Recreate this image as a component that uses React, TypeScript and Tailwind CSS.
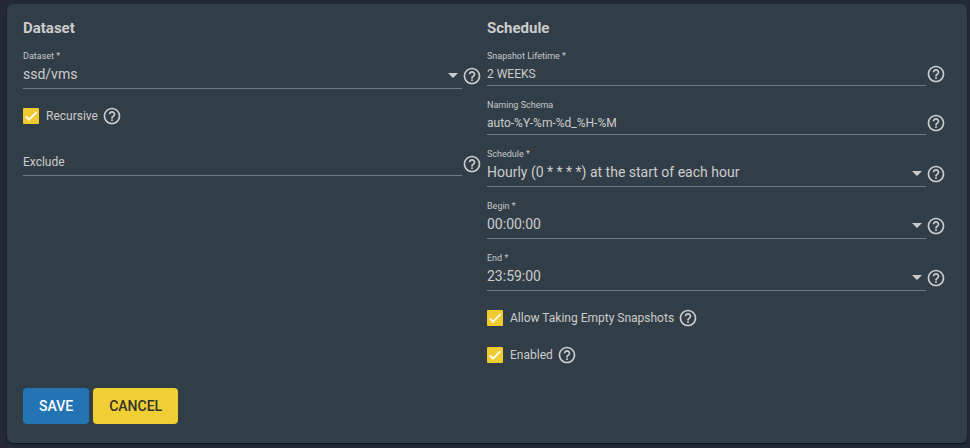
import { useId, useState } from 'react';
import { MdHelpOutline } from 'react-icons/md';
import clsx from 'clsx';

function HelpButton({ topic, className }: { topic: string; className?: string }) {
  return (
    <button
      type="button"
      aria-label={`Help: ${topic}`}
      className={clsx('shrink-0 text-[#cccccc]', className)}
    >
      <MdHelpOutline className="size-5" />
    </button>
  );
}

type FieldProps = { label: string; value?: string; required?: boolean };

function TextField({ label, value, required }: FieldProps) {
  const id = useId();
  return (
    <div className="mb-[13px] flex items-end pr-[5px]">
      <div className="min-w-0 flex-1">
        <label htmlFor={id} className="block text-[9px] leading-3 text-[#c6c8c9]">
          {label}
          {required && ' *'}
        </label>
        <input
          id={id}
          type="text"
          defaultValue={value}
          className="block h-6 w-full border-b border-[#737c82] bg-transparent text-xs outline-none"
        />
      </div>
      <HelpButton topic={label} className="mb-0.5" />
    </div>
  );
}

function SelectField({ label, value, required }: FieldProps) {
  const id = useId();
  return (
    <div className="mb-[13px] flex items-end pr-[5px]">
      <div className="min-w-0 flex-1">
        <label htmlFor={id} className="block text-[9px] leading-3 text-[#c6c8c9]">
          {label}
          {required && ' *'}
        </label>
        <div className="relative">
          <select
            id={id}
            defaultValue={value}
            className="block h-[27px] w-full appearance-none border-b border-[#737c82] bg-transparent pb-[3px] text-sm outline-none"
          >
            <option>{value}</option>
          </select>
          <svg
            viewBox="0 0 10 5"
            aria-hidden
            className="pointer-events-none absolute right-1 top-[11px] h-[5px] w-2.5 fill-[#cccccc]"
          >
            <path d="M0 0h10L5 5z" />
          </svg>
        </div>
      </div>
      <HelpButton topic={label} className="mb-[3px]" />
    </div>
  );
}

function CheckField({ label }: { label: string }) {
  const [checked, setChecked] = useState(true);
  return (
    <div className="flex h-7 items-center gap-1">
      <label className="flex items-center gap-[7px] text-xs">
        <span className="relative size-4">
          <input
            type="checkbox"
            checked={checked}
            onChange={(e) => setChecked(e.target.checked)}
            className="block size-4 appearance-none rounded-[1px] border-2 border-[#cccccc] checked:border-[#f0cb30] checked:bg-[#f0cb30]"
          />
          {checked && (
            <svg
              viewBox="0 0 24 24"
              aria-hidden
              className="pointer-events-none absolute inset-0 size-4 fill-none stroke-white stroke-[2.6]"
            >
              <path d="M4.1 12.7 9 17.6 20.3 6.3" />
            </svg>
          )}
        </span>
        {label}
      </label>
      <HelpButton topic={label} />
    </div>
  );
}

export default function App() {
  return (
    <main className="min-h-screen bg-[#232a35] pb-[5px] pl-[7px] pr-[3px] pt-1 font-[Roboto,sans-serif] text-[#cccccc]">
      <form
        onSubmit={(e) => e.preventDefault()}
        className="rounded-md bg-[#323e47] px-4 pb-[19px] pt-3 shadow-[0_1px_2px_rgba(0,0,0,0.6)]"
      >
        <div className="grid grid-cols-2">
          <section>
            <h2 className="mb-2.5 text-[15px] font-bold leading-6">Dataset</h2>
            <SelectField label="Dataset" value="ssd/vms" required />
            <CheckField label="Recursive" />
            <div className="mt-[22px] flex items-end pr-[5px]">
              <input
                type="text"
                aria-label="Exclude"
                placeholder="Exclude"
                className="block h-6 min-w-0 flex-1 border-b border-[#737c82] bg-transparent pb-1 text-xs outline-none placeholder:text-[#cccccc]"
              />
              <HelpButton topic="Exclude" className="mb-0.5" />
            </div>
          </section>

          <section>
            <h2 className="mb-2.5 text-[15px] font-bold leading-6">Schedule</h2>
            <TextField label="Snapshot Lifetime" value="2 WEEKS" required />
            <TextField label="Naming Schema" value="auto-%Y-%m-%d_%H-%M" />
            <SelectField label="Schedule" value="Hourly (0 * * * *) at the start of each hour" required />
            <SelectField label="Begin" value="00:00:00" required />
            <SelectField label="End" value="23:59:00" required />
            <div className="flex flex-col gap-[9px]">
              <CheckField label="Allow Taking Empty Snapshots" />
              <CheckField label="Enabled" />
            </div>
          </section>
        </div>

        <div className="mt-[19px] flex gap-1">
          <button type="submit" className="h-9 rounded-[4px] bg-[#2374b3] px-4 text-sm font-medium text-white">
            SAVE
          </button>
          <button type="button" className="h-9 rounded-[4px] bg-[#f0cf35] px-4 text-sm font-medium text-[#33332d]">
            CANCEL
          </button>
        </div>
      </form>
    </main>
  );
}
